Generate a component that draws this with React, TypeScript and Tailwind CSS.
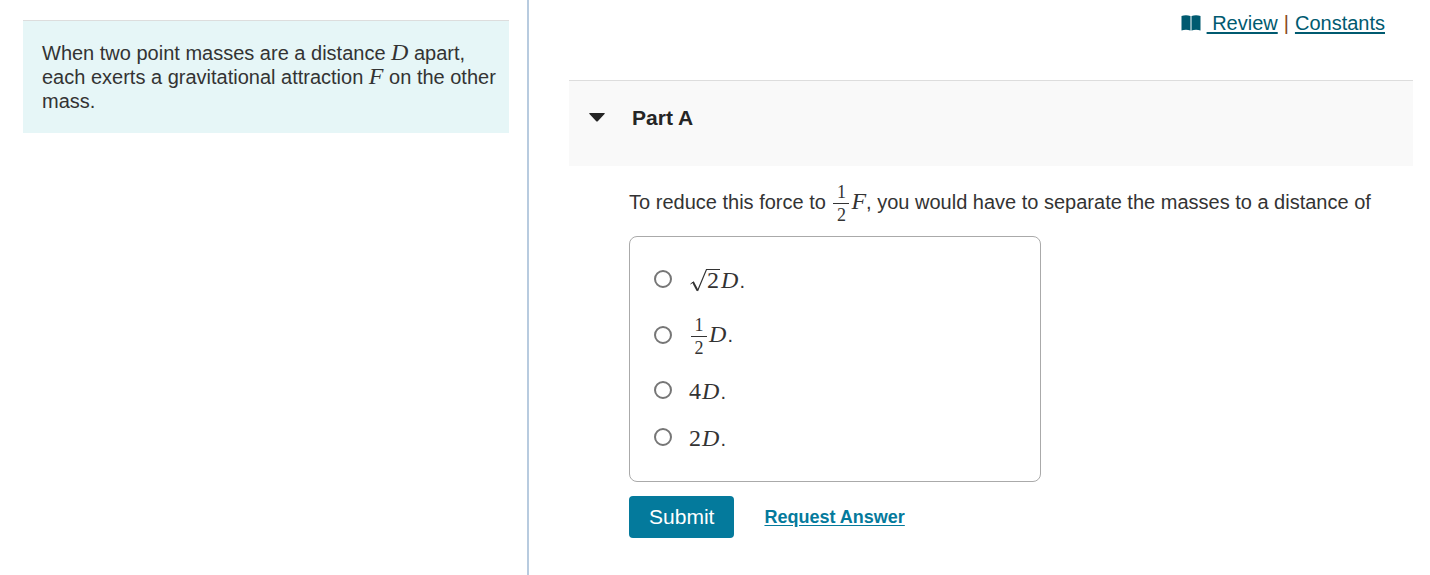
import { useState, type ReactNode } from 'react';

interface Choice {
  id: string;
  label: ReactNode;
}

const MathVar = ({ children }: { children: ReactNode }) => (
  <i className="font-['Liberation_Serif',serif] text-2xl leading-5">{children}</i>
);

const MathNum = ({ children }: { children: ReactNode }) => (
  <span className="mr-px font-['Liberation_Serif',serif] text-2xl leading-5">{children}</span>
);

const Half = () => (
  <span className="mx-0.5 -my-0.5 inline-flex flex-col items-center align-middle font-['Liberation_Serif',serif] text-lg leading-[22px]">
    <span className="w-4 border-b border-current text-center">1</span>
    <span>2</span>
  </span>
);

const Root = ({ children }: { children: ReactNode }) => (
  <span className="mr-px inline-flex items-baseline leading-5">
    <svg viewBox="0 0 18 23" className="-mb-1 h-[23px] w-[18px] self-start" fill="none" stroke="currentColor" aria-hidden="true">
      <path d="M1.5 15l3-2.2" strokeWidth="1" />
      <path d="M4 13l4.5 8.5" strokeWidth="2" />
      <path d="M8.5 22L17.5 0.5H18" strokeWidth="1.2" />
    </svg>
    <span className="border-t border-current">{children}</span>
  </span>
);

const choices: Choice[] = [
  { id: 'root2', label: <><Root><MathNum>2</MathNum></Root><MathVar>D</MathVar></> },
  { id: 'half', label: <><Half /><MathVar>D</MathVar></> },
  { id: 'four', label: <><MathNum>4</MathNum><MathVar>D</MathVar></> },
  { id: 'two', label: <><MathNum>2</MathNum><MathVar>D</MathVar></> },
];

const BookIcon = () => (
  <svg viewBox="0 0 20 16" className="h-4 w-5" fill="currentColor" aria-hidden="true">
    <path d="M0.5 1C3 0 7 0 9.3 1V15.4C7 14.4 3 14.4 0.5 15.4Z" />
    <path d="M10.7 1C13 0 17 0 19.5 1V15.4C17 14.4 13 14.4 10.7 15.4Z" />
    <path d="M9.3 1H10.7V15.4H9.3Z" opacity="0.4" />
  </svg>
);

const App = () => {
  const [selected, setSelected] = useState('');
  const [isOpen, setIsOpen] = useState(true);

  return (
    <div className="flex min-h-screen bg-white font-['Liberation_Sans',Arial,sans-serif] text-xl leading-6 text-[#333]">
      <aside className="w-[37%] border-r-2 border-[#b8cbdf] pt-5 pr-[18px] pl-[23px]">
        <div className="border-t border-[#ddd] bg-[#e6f6f7] py-5 pr-2 pl-[19px]">
          <p>
            When two point masses are a distance <MathVar>D</MathVar> apart, each exerts a gravitational attraction{' '}
            <MathVar>F</MathVar> on the other mass.
          </p>
        </div>
      </aside>

      <main className="flex-1 pt-[11px] pr-[17px] pl-10">
        <nav className="flex items-center justify-end pr-7 text-[#005a70]">
          <BookIcon />
          <a href="#review" className="ml-1.5 whitespace-pre underline underline-offset-2"> Review</a>
          <span className="mx-1.5 text-[#8a4b20]">|</span>
          <a href="#constants" className="underline underline-offset-2">Constants</a>
        </nav>

        <section className="mt-[45px]">
          <h2 className="border-t border-[#ddd] bg-[#f9f9f9]">
            <button
              type="button"
              onClick={() => setIsOpen(!isOpen)}
              aria-expanded={isOpen}
              className="flex w-full items-center px-5 pt-[25px] pb-9 text-[21px] font-bold text-[#252525]"
            >
              <svg viewBox="0 0 16 10" className="mr-[27px] h-2.5 w-4" fill="currentColor" aria-hidden="true">
                <path d="M1 0H15Q16.5 0 15.5 1L9 8Q8 9 7 8L0.5 1Q-0.5 0 1 0Z" />
              </svg>
              Part A
            </button>
          </h2>

          {isOpen && (
            <form className="pt-[17px] pr-8 pl-[60px]" onSubmit={(e) => e.preventDefault()}>
              <p>
                To reduce this force to <Half /><MathVar>F</MathVar>, you would have to separate the masses to a distance of
              </p>
              <fieldset className="mt-3 flex max-w-[412px] flex-col gap-[23px] rounded-lg border border-[#aaa] px-6 pt-[30px] pb-8">
                {choices.map((choice) => (
                  <label key={choice.id} className="flex min-h-6 items-center gap-[17px]">
                    <input
                      type="radio"
                      name="distance"
                      value={choice.id}
                      checked={selected === choice.id}
                      onChange={() => setSelected(choice.id)}
                      className="size-[18px] appearance-none rounded-full border-2 border-[#767676] bg-white checked:border-4 checked:border-[#047a9c]"
                    />
                    <span className="-mb-0.5 pt-0.5">
                      {choice.label}
                      <span className="ml-px">.</span>
                    </span>
                  </label>
                ))}
              </fieldset>
              <div className="mt-3.5 flex items-center gap-[30px]">
                <button type="submit" className="rounded-sm bg-[#047a9c] px-5 py-[9px] text-[21px] text-white">Submit</button>
                <a href="#answer" className="text-lg font-bold text-[#047a9c] underline underline-offset-2">Request Answer</a>
              </div>
            </form>
          )}
        </section>
      </main>
    </div>
  );
};

export default App;
